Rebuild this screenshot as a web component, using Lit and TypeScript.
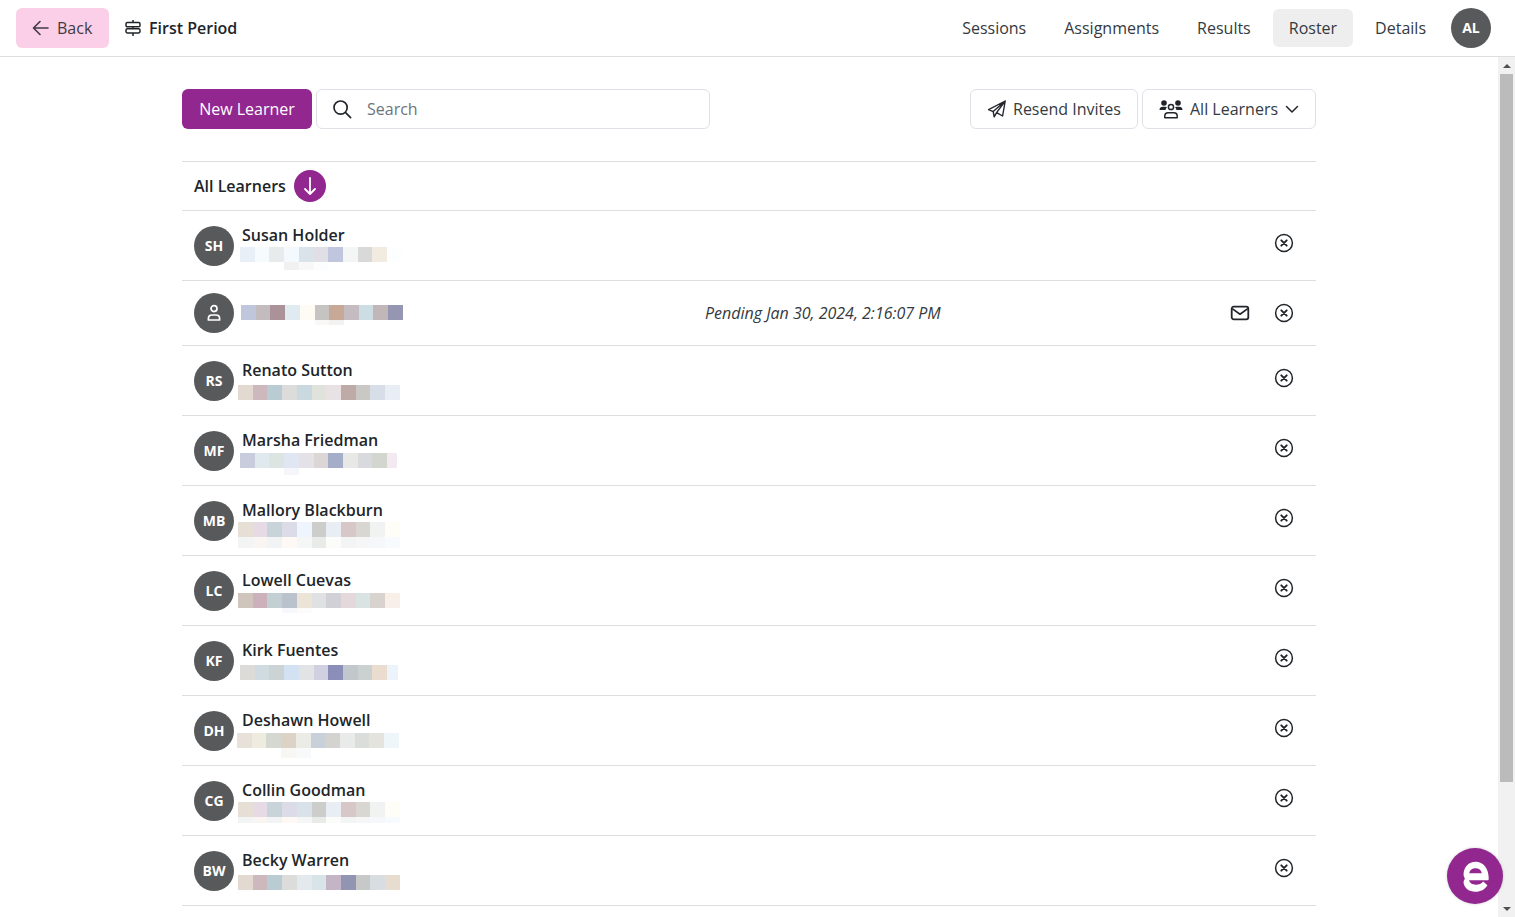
import { LitElement, html, css, svg } from "lit";
import { customElement } from "lit/decorators.js";

type Cell = string;
interface Learner {
  initials: string;
  name: string;
  x: number;
  y: number;
  w?: number;
  colors: Cell[];
  faint?: Cell[];
  faintH?: number;
  pending?: string;
}

const __ = "transparent";

const learners: Learner[] = [
  {
    initials: "SH", name: "Susan Holder", x: 240, y: 36,
    colors: ["#e8eff7", "#f6fbfe", "#e7ebec", "#f3f9fd", "#dbe3ea", "#e0dfe5", "#bfc6de", "#f4f5f5", "#d8d9d8", "#f2ebdf", "#fdfeff"],
    faint: [__, __, __, "#f1f1f2", "#f8f8f8", "#fcfdff"], faintH: 8,
  },
  {
    initials: "", name: "", x: 241, y: 0,
    colors: ["#c0c7dc", "#c2bcbf", "#ab9298", "#e0ebf1", "#fefbf5", "#c5c4c2", "#c8a998", "#c4bcc0", "#cddde4", "#c1b7b9", "#9596b2"],
    faint: [__, __, __, __, __, "#faf8f6", "#f3f2f2"], faintH: 5,
    pending: "Pending Jan 30, 2024, 2:16:07 PM",
  },
  {
    initials: "RS", name: "Renato Sutton", x: 238, y: 39,
    colors: ["#e2d9d1", "#cdb9bd", "#b9ccd3", "#dcdcda", "#cad8e0", "#e0e2dc", "#e8e2e4", "#beaba8", "#c9c8c4", "#d8dee7", "#e9eef5"],
  },
  {
    initials: "MF", name: "Marsha Friedman", x: 240, y: 37, w: 157,
    colors: ["#c9ccdc", "#dfe9ee", "#dde5e3", "#e0e7f3", "#e5e2e7", "#dcd6d6", "#a4aec8", "#e8e9e6", "#d9dade", "#d2d6cf", "#f3e9f0"],
    faint: [__, __, __, "#f4f6f9"], faintH: 7,
  },
  {
    initials: "MB", name: "Mallory Blackburn", x: 238, y: 36,
    colors: ["#e6dfd5", "#e6dbe5", "#c9d4da", "#dcdce8", "#eff5fc", "#cdcdcc", "#e9edf4", "#d8c7c8", "#d9d7d2", "#f1f2f2", "#fefdf8"],
    faint: ["#f3f4f4", "#f9f5f2", "#f1f3f4", "#fef9f5", "#f5f6f6", "#e9ebe9", "#fcfcfa", "#f3f5f4", "#f5f6f5", "#f5f7fb", "#f7fbfe"], faintH: 11,
  },
  {
    initials: "LC", name: "Lowell Cuevas", x: 238, y: 37,
    colors: ["#cfc5bc", "#ccb1bc", "#c3d0d3", "#b9c2cd", "#ece4d7", "#dfe1e3", "#d2d0d7", "#e4d8da", "#d8e3e2", "#d8d3cf", "#f8efe9"],
    faint: [__, __, __, "#f7f8fc", "#fdfcfa"], faintH: 5,
  },
  {
    initials: "KF", name: "Kirk Fuentes", x: 240, y: 39, w: 158,
    colors: ["#dcdbd8", "#d0dae1", "#cbd3d4", "#d2e2f2", "#e2e3e5", "#d0d0e0", "#8a8eb8", "#c1c7ca", "#cbd0d0", "#eaddd0", "#ecf3fa"],
  },
  {
    initials: "DH", name: "Deshawn Howell", x: 237, y: 37,
    colors: ["#e8e1da", "#eeecdf", "#d5d8d0", "#dcd2c6", "#ecece6", "#c8d0da", "#d5d3d0", "#e9ebeb", "#d9dedb", "#e4e3de", "#eff6fa"],
    faint: [__, __, __, "#f8f7f4", "#f8f9fb"], faintH: 10,
  },
  {
    initials: "CG", name: "Collin Goodman", x: 238, y: 36,
    colors: ["#e6dfd5", "#e6dbe5", "#c9d4da", "#dcdce8", "#d9e2e8", "#cdcdcc", "#e9edf4", "#d8c7c8", "#d9d7d2", "#f1f2f2", "#fefdf8"],
    faint: ["#f3f4f4", "#f9f5f2", "#f1f3f4", "#fef9f5", "#f5f6f6", "#e9ebe9", "#fcfcfa", "#f3f5f4", "#f5f6f5", "#f5f7fb", "#f7fbfe"], faintH: 6,
  },
  {
    initials: "BW", name: "Becky Warren", x: 238, y: 39,
    colors: ["#e2d9d1", "#cdb9bd", "#b9ccd3", "#dcdcda", "#e3e9ec", "#d9e4e8", "#c3b5c6", "#9295b2", "#c7c9c8", "#d7dde1", "#e6ddd0"],
  },
];

const xCircle = svg`<circle cx="10" cy="10" r="8.4" fill="none" stroke="currentColor" stroke-width="1.5"/><path d="M7.3 7.3l5.4 5.4M12.7 7.3l-5.4 5.4" fill="none" stroke="currentColor" stroke-width="1.9" stroke-linecap="round"/>`;
const mail = svg`<rect x="1.7" y="3.7" width="16.6" height="12.6" rx="2" fill="none" stroke="currentColor" stroke-width="1.8"/><path d="M2.2 5.6l7.8 5.6 7.8-5.6" fill="none" stroke="currentColor" stroke-width="1.7" stroke-linejoin="round"/>`;

@customElement("app-root")
export class AppRoot extends LitElement {
  static styles = css`
    :host {
      display: flex;
      flex-direction: column;
      height: 917px;
      overflow: hidden;
      font-family: "Open Sans", sans-serif;
      font-size: 16px;
      line-height: 24px;
      color: #212529;
      background: #fff;
      position: relative;
    }
    svg { display: block; flex: none; }
    header {
      flex: none;
      height: 56px;
      border-bottom: 1px solid #dedede;
      display: flex;
      align-items: center;
      padding: 0 24px 0 16px;
    }
    .back {
      display: flex;
      align-items: center;
      gap: 8px;
      height: 40px;
      width: 93px;
      box-sizing: border-box;
      padding-left: 16px;
      background: #fbcfe8;
      border-radius: 6px;
      color: #3f3a40;
    }
    .title {
      display: flex;
      align-items: center;
      gap: 8px;
      margin-left: 16px;
      font-weight: 600;
    }
    nav {
      margin-left: auto;
      display: flex;
      align-items: center;
      gap: 6px;
    }
    nav a {
      padding: 7px 16px;
      border-radius: 6px;
      color: #343a40;
    }
    nav a.on { background: #eeeeee; }
    .me { margin-left: 3px; }
    .avatar {
      flex: none;
      width: 40px;
      height: 40px;
      border-radius: 50%;
      background: #58595b;
      color: #fff;
      font-size: 14px;
      font-weight: 700;
      display: flex;
      align-items: center;
      justify-content: center;
    }
    .body {
      flex: 1;
      min-height: 0;
      display: flex;
    }
    main {
      flex: 1;
      min-width: 0;
      overflow: hidden;
    }
    .scrollbar {
      flex: none;
      width: 17px;
      background: #f1f1f1;
      display: flex;
      flex-direction: column;
      align-items: center;
    }
    .arrow {
      flex: none;
      height: 17px;
      display: flex;
      align-items: center;
      justify-content: center;
    }
    .arrow.down { margin-top: auto; }
    .tri { width: 0; height: 0; border-left: 4px solid transparent; border-right: 4px solid transparent; }
    .up .tri { border-bottom: 4px solid #505050; }
    .down .tri { border-top: 4px solid #505050; }
    .thumb { flex: none; width: 13px; height: 708px; background: #bbbbbb; }
    .page {
      width: 1134px;
      margin: 0 auto;
      padding-top: 32px;
    }
    .toolbar {
      display: flex;
      align-items: stretch;
      gap: 4px;
      height: 40px;
      margin-bottom: 32px;
    }
    .primary {
      width: 130px;
      display: flex;
      align-items: center;
      justify-content: center;
      background: #91278f;
      color: #fff;
      border-radius: 6px;
    }
    .search {
      width: 394px;
      box-sizing: border-box;
      display: flex;
      align-items: center;
      gap: 15px;
      padding-left: 15px;
      border: 1px solid #dee2e6;
      border-radius: 6px;
      color: #6c757d;
    }
    .spacer { flex: 1; }
    .btn {
      box-sizing: border-box;
      display: flex;
      align-items: center;
      border: 1px solid #dee2e6;
      border-radius: 6px;
      color: #343a40;
      padding-left: 16px;
    }
    .btn.resend { width: 168px; gap: 6px; }
    .btn.filter { width: 174px; gap: 7px; }
    .list { border-top: 1px solid #dedede; }
    .head {
      height: 48px;
      border-bottom: 1px solid #dedede;
      display: flex;
      align-items: center;
      gap: 8px;
      padding-left: 12px;
      font-weight: 600;
    }
    .sort {
      width: 32px;
      height: 32px;
      border-radius: 50%;
      background: #91278f;
      color: #fff;
      display: flex;
      align-items: center;
      justify-content: center;
    }
    .row {
      height: 69px;
      border-bottom: 1px solid #dedede;
      display: flex;
      align-items: center;
      padding: 0 22px 0 12px;
    }
    .row.invite { height: 64px; }
    .row .avatar { margin-right: 8px; }
    .info {
      flex: 0 0 463px;
      align-self: flex-start;
      padding-top: 12px;
      color: #212529;
    }
    .invite .info { align-self: center; padding-top: 0; }
    .name { height: 24px; white-space: nowrap; font-weight: 600; }
    .mosaic { display: flex; flex-direction: column; overflow: hidden; }
    .cells { display: grid; grid-template-columns: repeat(11, 14.73px); width: 162px; }
    .cells.main { height: 15px; }
    .pending { font-style: italic; color: #343a40; white-space: nowrap; }
    .actions {
      margin-left: auto;
      align-self: flex-start;
      padding-top: 22px;
      display: flex;
      gap: 24px;
      color: #212529;
    }
    .bubble {
      position: absolute;
      left: 1447px;
      top: 848px;
      width: 56px;
      height: 56px;
      border-radius: 50%;
      background: #91278f;
      box-shadow: 0 0 3px rgba(0, 0, 0, 0.2);
      display: flex;
      align-items: center;
      justify-content: center;
    }
  `;

  private mosaic(l: Learner) {
    const ml = l.x - 242;
    const mt = l.pending ? 4 : l.y - 36;
    return html`<div class="mosaic" style="margin-left:${ml}px;margin-top:${mt}px;width:${l.w ?? 162}px">
      <div class="cells main">${l.colors.map((c) => html`<span style="background:${c}"></span>`)}</div>
      ${l.faint
        ? html`<div class="cells" style="height:${l.faintH}px">${l.faint.map((c) => html`<span style="background:${c}"></span>`)}</div>`
        : ""}
    </div>`;
  }

  private row(l: Learner) {
    return html`<div class="row ${l.pending ? "invite" : ""}">
      <div class="avatar">
        ${l.initials ||
        html`<svg width="20" height="20" viewBox="0 0 20 20" fill="none" stroke="#fff" stroke-width="1.7"><circle cx="10" cy="5.6" r="3"/><path d="M4.4 17h11.2v-1.6c0-2-1.600-3.400-3.600-3.400H8c-2 0-3.600 1.400-3.600 3.400z" stroke-linejoin="round"/></svg>`}
      </div>
      <div class="info">
        ${l.name ? html`<div class="name">${l.name}</div>` : ""}
        ${this.mosaic(l)}
      </div>
      ${l.pending ? html`<div class="pending">${l.pending}</div>` : ""}
      <div class="actions">
        ${l.pending ? html`<svg width="20" height="20" viewBox="0 0 20 20">${mail}</svg>` : ""}
        <svg width="20" height="20" viewBox="0 0 20 20">${xCircle}</svg>
      </div>
    </div>`;
  }

  render() {
    return html`
      <header>
        <div class="back">
          <svg width="17" height="16" viewBox="0 0 17 16" fill="none" stroke="currentColor" stroke-width="1.6" stroke-linecap="round" stroke-linejoin="round"><path d="M16 8H1.500M8 1.500L1.500 8 8 14.500"/></svg>
          <span>Back</span>
        </div>
        <div class="title">
          <svg width="16" height="16" viewBox="0 0 16 16" fill="none" stroke="#212529" stroke-width="1.5"><path d="M8 0v2.500M8 7v2M8 13v3"/><rect x="1" y="2.600" width="14" height="4.200" rx="1.400"/><rect x="1" y="8.800" width="14" height="4.200" rx="1.400"/></svg>
          <span>First Period</span>
        </div>
        <nav>
          <a>Sessions</a><a>Assignments</a><a>Results</a><a class="on">Roster</a><a>Details</a>
          <div class="avatar me">AL</div>
        </nav>
      </header>
      <div class="body">
        <main>
          <div class="page">
            <div class="toolbar">
              <div class="primary">New Learner</div>
              <div class="search">
                <svg width="20" height="20" viewBox="0 0 20 20" fill="none" stroke="#212529" stroke-width="1.7" stroke-linecap="round"><circle cx="8.600" cy="8.600" r="6.600"/><path d="M13.600 13.600l5 5"/></svg>
                <span>Search</span>
              </div>
              <div class="spacer"></div>
              <div class="btn resend">
                <svg width="20" height="20" viewBox="0 0 20 20" fill="none" stroke="#212529" stroke-width="1.4" stroke-linejoin="round"><path d="M18.200 2L1.600 10.600l4.600 2L18.200 2zM18.200 2L15.600 17l-6-3.400L18.200 2zM6.200 12.600l1 5.200 2.400-4.200"/></svg>
                <span>Resend Invites</span>
              </div>
              <div class="btn filter">
                <svg width="24" height="20" viewBox="0 0 24 20" fill="#212529"><circle cx="5" cy="4" r="2.800"/><circle cx="19" cy="4" r="2.800"/><path d="M.5 11c0-2 1.400-3.200 3.200-3.200h2.600c.6 0 1.200.2 1.700.5-.8.7-1.300 1.600-1.500 2.700zM23.500 11c0-2-1.400-3.200-3.200-3.200h-2.600c-.6 0-1.200.2-1.700.5.8.7 1.300 1.600 1.500 2.700z"/><circle cx="12" cy="8" r="2.600" fill="none" stroke="#212529" stroke-width="1.5"/><path d="M5.800 18.800v-1.600c0-2 1.600-3.400 3.400-3.400h5.600c1.800 0 3.400 1.400 3.400 3.400v1.600z" fill="none" stroke="#212529" stroke-width="1.5" stroke-linejoin="round"/></svg>
                <span>All Learners</span>
                <svg width="14" height="14" viewBox="0 0 14 14" fill="none" stroke="#212529" stroke-width="1.5" stroke-linecap="round" stroke-linejoin="round"><path d="M1.500 4.500L7 10l5.500-5.500"/></svg>
              </div>
            </div>
            <div class="list">
              <div class="head">
                <span>All Learners</span>
                <div class="sort">
                  <svg width="16" height="18" viewBox="0 0 16 18" fill="none" stroke="currentColor" stroke-width="1.8" stroke-linecap="round" stroke-linejoin="round"><path d="M8 1v16M3 12l5 5 5-5"/></svg>
                </div>
              </div>
              ${learners.map((l) => this.row(l))}
            </div>
          </div>
        </main>
        <div class="scrollbar">
          <div class="arrow up"><div class="tri"></div></div>
          <div class="thumb"></div>
          <div class="arrow down"><div class="tri"></div></div>
        </div>
      </div>
      <div class="bubble">
        <svg width="29" height="37" viewBox="0 0 34 34" preserveAspectRatio="none"><path d="M17 3.500C9 3.500 3 8.500 3 15.500c0 1.800 1.500 2.800 1.500 3.500S3 20.500 3 22c0 5 6 9 14 9 6 0 11-2 14-6l-5-3.500c-2 2-5 3-8.500 3-4.500 0-7.500-1.500-8-4h22c.5 0 1-.6 1-1.500C32.500 9.500 26 3.500 17 3.500zM9.600 14c.6-2.800 3.600-4.500 7.400-4.500s6.800 1.700 7.400 4.500z" fill="#fff" fill-rule="evenodd"/></svg>
      </div>
    `;
  }
}
